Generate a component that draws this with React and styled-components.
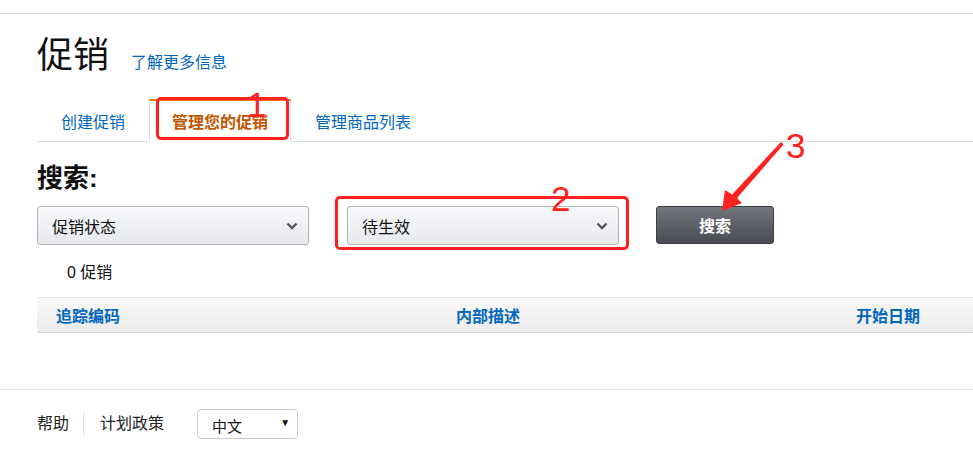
import styled, { createGlobalStyle } from "styled-components";

const Global = createGlobalStyle`
  body {
    margin: 0;
    background: #fff;
    font-family: "Liberation Sans", "Noto Sans CJK SC", sans-serif;
    color: #111;
  }
`;

const Page = styled.div`
  position: relative;
  width: 973px;
  height: 473px;
  overflow: hidden;
  padding-top: 13px;
  box-sizing: border-box;
`;

const Rule = styled.div`
  height: 1px;
  background: #dcdcdc;
`;

const Main = styled.div`
  padding-left: 37px;
`;

const Header = styled.div`
  display: flex;
  align-items: baseline;
  gap: 22px;
  margin-top: 22px;
`;

const Title = styled.h1`
  margin: 0;
  font-size: 36px;
  line-height: 40px;
  font-weight: 400;
  color: #111;
`;

const Link = styled.a`
  font-size: 16px;
  color: #0066c0;
  text-decoration: none;
`;

const Tabs = styled.div`
  display: flex;
  margin-top: 23px;
  border-bottom: 1px solid #dddddd;
`;

const Tab = styled.div`
  box-sizing: border-box;
  height: 43px;
  margin-bottom: -1px;
  padding: 12px ${({ $active }) => ($active ? 22 : 23)}px 9px;
  font-size: 16px;
  line-height: 20px;
  border-top: 2px solid ${({ $active }) => ($active ? "#e47911" : "transparent")};
  border-left: 1px solid ${({ $active }) => ($active ? "#dddddd" : "transparent")};
  border-right: 1px solid ${({ $active }) => ($active ? "#dddddd" : "transparent")};
  border-bottom: 1px solid ${({ $active }) => ($active ? "#fff" : "transparent")};
  background: ${({ $active }) => ($active ? "#fff" : "transparent")};
  color: ${({ $active }) => ($active ? "#c45500" : "#0066c0")};
  font-weight: ${({ $active }) => ($active ? 700 : 400)};
`;

const Heading = styled.h2`
  margin: 21px 0 0;
  font-size: 26px;
  line-height: 30px;
  font-weight: 700;
`;

const SearchRow = styled.div`
  display: flex;
  align-items: flex-start;
  gap: 38px;
  margin-top: 13px;
`;

const Select = styled.div`
  box-sizing: border-box;
  width: 272px;
  height: 39px;
  display: flex;
  align-items: center;
  justify-content: space-between;
  padding: 0 10px 0 14px;
  border: 1px solid #adb1b8;
  border-radius: 3px;
  background: linear-gradient(#f7f8fa, #e7e9ec);
  box-shadow: inset 0 1px 0 rgba(255, 255, 255, 0.6);
  font-size: 16px;
  color: #111;
`;

const Button = styled.button`
  box-sizing: border-box;
  width: 118px;
  height: 38px;
  margin-left: -1px;
  border: 1px solid #3d4045;
  border-radius: 3px;
  background: linear-gradient(#73767c, #484b51);
  color: #fff;
  font-family: inherit;
  font-size: 16px;
  font-weight: 700;
`;

const Count = styled.div`
  margin-top: 18px;
  padding-left: 30px;
  font-size: 16px;
  line-height: 20px;
`;

const TableHead = styled.div`
  display: grid;
  grid-template-columns: 400px 400px 1fr;
  box-sizing: border-box;
  height: 36px;
  margin-top: 14px;
  align-items: center;
  border-top: 1px solid #e3e3e3;
  border-bottom: 1px solid #d6d6d6;
  background: linear-gradient(#f8f8f8, #ececec);
`;

const Col = styled.div`
  padding-left: 19px;
  font-size: 16px;
  font-weight: 700;
  color: #0066c0;
`;

const Footer = styled.div`
  margin-top: 56px;
  border-top: 1px solid #e4e4e4;
  padding: 19px 0 0 37px;
  display: flex;
  align-items: center;
`;

const FootItem = styled.div`
  font-size: 16px;
  line-height: 22px;
  color: #222;
  padding: 0 ${({ $last }) => ($last ? 15 : 14)}px 0 ${({ $first }) => ($first ? 0 : 16)}px;
  border-left: ${({ $first }) => ($first ? "none" : "1px solid #ddd")};
`;

const LangSelect = styled.div`
  box-sizing: border-box;
  width: 101px;
  height: 30px;
  margin-left: 18px;
  border: 1px solid #cccccc;
  border-radius: 4px;
  display: flex;
  align-items: center;
  justify-content: space-between;
  padding: 3px 7px 0 14px;
  font-size: 15px;
  color: #111;
`;

const Caret = styled.span`
  font-size: 10px;
  margin-top: -6px;
  color: #111;
`;

const Mark = styled.div`
  position: absolute;
  box-sizing: border-box;
  left: ${({ $x }) => $x}px;
  top: ${({ $y }) => $y}px;
  width: ${({ $w }) => $w}px;
  height: ${({ $h }) => $h}px;
  border: 3px solid #ff2020;
  border-radius: 5px;
`;

const Num = styled.span`
  position: absolute;
  left: ${({ $x }) => $x}px;
  top: ${({ $y }) => $y}px;
  font-family: "Liberation Sans", sans-serif;
  font-size: 35px;
  line-height: 1;
  color: #ff2020;
`;

const Arrow = styled.svg`
  position: absolute;
  left: 710px;
  top: 135px;
`;

function Chevron() {
  return (
    <svg width="12" height="8" viewBox="0 0 12 8">
      <polyline points="1.5,1.5 6,6 10.5,1.5" fill="none" stroke="#555" strokeWidth="2.3" />
    </svg>
  );
}

export default function App() {
  return (
    <Page>
      <Global />
      <Rule />
      <Main>
        <Header>
          <Title>促销</Title>
          <Link href="#">了解更多信息</Link>
        </Header>
        <Tabs>
          <Tab>创建促销</Tab>
          <Tab $active>管理您的促销</Tab>
          <Tab>管理商品列表</Tab>
        </Tabs>
        <Heading>搜索:</Heading>
        <SearchRow>
          <Select>
            促销状态
            <Chevron />
          </Select>
          <Select>
            待生效
            <Chevron />
          </Select>
          <Button>搜索</Button>
        </SearchRow>
        <Count>0 促销</Count>
        <TableHead>
          <Col>追踪编码</Col>
          <Col>内部描述</Col>
          <Col>开始日期</Col>
        </TableHead>
      </Main>
      <Footer>
        <FootItem $first>帮助</FootItem>
        <FootItem $last>计划政策</FootItem>
        <LangSelect>
          中文
          <Caret>▼</Caret>
        </LangSelect>
      </Footer>

      <Mark $x={156} $y={97} $w={133} $h={43} />
      <Num $x={247} $y={87}>1</Num>
      <Mark $x={335} $y={196} $w={294} $h={54} />
      <Num $x={551} $y={181}>2</Num>
      <Num $x={786} $y={128}>3</Num>
      <Arrow width="90" height="85" viewBox="0 0 90 85">
        <polygon points="71,7 73.5,9.5 27,63 32,68 12,76 15,55 22,59.5" fill="#ff2020" />
      </Arrow>
    </Page>
  );
}
